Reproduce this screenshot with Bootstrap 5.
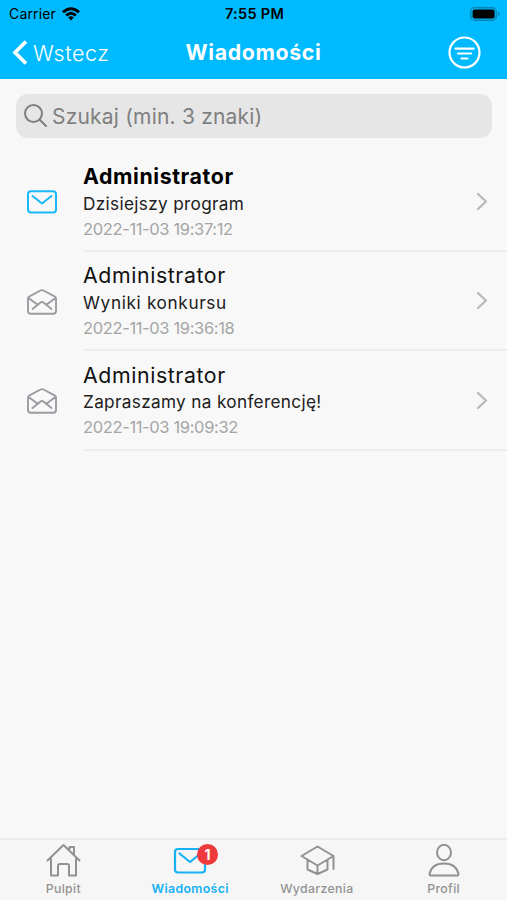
<!DOCTYPE html>
<html lang="pl">
<head>
<meta charset="utf-8">
<meta name="viewport" content="width=device-width, initial-scale=1">
<title>Wiadomości</title>
<link href="https://cdn.jsdelivr.net/npm/bootstrap@5.3.0/dist/css/bootstrap.min.css" rel="stylesheet">
<style>
body{font-family:Inter,"Open Sans",sans-serif;background:#f8f8f8;height:900px;overflow:hidden;color:#000}
svg{display:block;flex:none;fill:none;stroke:currentColor;stroke-linecap:round;stroke-linejoin:round;overflow:visible}
.app-top{background:#00baff;height:79px}
.status-bar{height:27px;font-size:14px;line-height:27px;padding:0 7px 0 9px;letter-spacing:.15px}
.status-time{font-size:14.5px;letter-spacing:.3px}
.side{flex:1 1 0}
.status-wifi{margin-left:6px}
.title-bar{height:52px;padding:0 12px;color:#fff}
.back-icon{margin-right:6px}
.back-label{font-size:21.5px;font-weight:300;letter-spacing:.55px}
.page-title{font-size:21.3px;font-weight:700;letter-spacing:.65px}
.filter-icon{margin:-1px 14px 0 0}
.search-box{margin:15px 15px 0 15.5px;height:43.5px;border-radius:12px;background:#e6e6e6;color:#7f7f7f;padding-left:8px;font-size:21px;letter-spacing:.2px}
.search-label{margin:1px 0 0 5.5px}
.msg-list{padding-top:15px}
.msg-row{height:99.4px}
.msg-icon{width:83px;padding-left:27px;color:#999ca0}
.msg-body{border-bottom:2px solid #ededed;padding:10.500px 19px 0 0}
.msg-name{font-size:21.3px;line-height:27.5px;letter-spacing:.6px;color:#111}
.msg-text{font-size:17.2px;line-height:25px;color:#202020;letter-spacing:.33px}
.msg-row:nth-child(2) .msg-text{letter-spacing:.65px}
.msg-date{font-size:16.5px;line-height:26px;color:#a5a5a5;letter-spacing:-.36px}
.msg-chev{color:#b8b8b8;margin-top:23px}
.unread .msg-icon{color:#18b9f6}
.unread .msg-name{font-weight:700;color:#000}
.tab-bar{flex:none;height:62px;background:#f6f6f6;border-top:2px solid #ebebeb;color:#929292;font-size:12.3px;font-weight:500;letter-spacing:.35px}
.tab-item{flex:1 1 0;padding-top:3px}
.tab-item svg{height:34px;margin-bottom:2.5px}
.tab-item.current{color:#14b1f5;font-weight:600}
.tab-count{left:24px;top:1px;width:21px;height:21px;background:#ee3a3d;color:#fff;font-size:14px;font-weight:700;letter-spacing:0}
</style>
<script src="https://cdn.jsdelivr.net/npm/bootstrap@5.3.0/dist/js/bootstrap.bundle.min.js"></script>
</head>
<body class="d-flex flex-column">
<header class="app-top">
  <div class="status-bar d-flex align-items-center">
    <div class="side d-flex align-items-center"><span>Carrier</span>
      <svg class="status-wifi" width="18" height="14" viewBox="0 0 18 14"><g fill="#000" stroke="none"><path d="M0 4.2Q9-3.8 18 4.2L16 6.3Q9 .2 2 6.3Z"/><path d="M3.2 7.4Q9 2.2 14.8 7.4L12.8 9.4Q9 6.1 5.2 9.4Z"/><path d="M6.2 10.4Q9 8 11.8 10.4L9 13.4Z"/></g></svg></div>
    <span class="status-time fw-semibold">7:55 PM</span>
    <div class="side d-flex justify-content-end">
      <svg width="30" height="14" viewBox="0 0 30 14"><rect x=".8" y=".8" width="25.5" height="12.4" rx="3.8" stroke="#0784b4" stroke-width="1.4"/><rect x="2.6" y="2.6" width="22" height="8.8" rx="2" fill="#000" stroke="none"/><path d="M28 5v4q1.700-.6 1.700-2T28 5Z" fill="#0784b4" stroke="none"/></svg></div>
  </div>
  <div class="title-bar d-flex align-items-center">
    <div class="side d-flex align-items-center">
      <svg class="back-icon" width="15" height="26" viewBox="0 0 15 26" stroke-width="3.600"><path d="M14 1.500 3 12.500 14 23.500" stroke-linecap="butt" stroke-linejoin="miter"/></svg>
      <span class="back-label">Wstecz</span></div>
    <span class="page-title">Wiadomości</span>
    <div class="side d-flex justify-content-end">
      <svg class="filter-icon" width="33" height="33" viewBox="0 0 33 33" stroke-width="2.200"><circle cx="16.500" cy="16.500" r="15"/><path d="M7.500 12.700h18M10 17.500h13M13.500 22.500h6"/></svg></div>
  </div>
</header>
<main class="flex-grow-1">
  <div class="search-box d-flex align-items-center">
    <svg width="23" height="23" viewBox="0 0 23 23" stroke-width="2"><circle cx="9.500" cy="9.500" r="8.500"/><path d="m15.700 15.700 6.300 6.300"/></svg>
    <span class="search-label">Szukaj (min. 3 znaki)</span>
  </div>
  <div class="msg-list">
    <div class="msg-row d-flex unread">
      <div class="msg-icon d-flex align-items-center"><svg width="30" height="24" viewBox="0 0 30 24" stroke-width="2"><rect x="1" y="1.200" width="28" height="21.200" rx="3"/><path d="m5.500 6 9.500 7.500L24.500 6"/></svg></div>
      <div class="msg-body flex-grow-1 d-flex justify-content-between"><div><div class="msg-name">Administrator</div><div class="msg-text">Dzisiejszy program</div><div class="msg-date">2022-11-03 19:37:12</div></div>
      <svg class="msg-chev" width="12" height="28" viewBox="0 0 12 28" stroke-width="2.200"><path d="m2 8 8 7.500L2 23"/></svg></div>
    </div>
    <div class="msg-row d-flex">
      <div class="msg-icon d-flex align-items-center"><svg width="30" height="26" viewBox="0 0 30 26" stroke-width="1.900"><path d="M1 9.500Q1 8 2.500 7.300L13.500 1.500Q15 .8 16.500 1.500L27.500 7.300Q29 8 29 9.500V22q0 2.700-2.700 2.700H3.700Q1 24.700 1 22ZM1.500 9 11 16M28.500 9 19 16M5.500 20 13.500 13.500Q15 12.500 16.500 13.500L24.500 20"/></svg></div>
      <div class="msg-body flex-grow-1 d-flex justify-content-between"><div><div class="msg-name">Administrator</div><div class="msg-text">Wyniki konkursu</div><div class="msg-date">2022-11-03 19:36:18</div></div>
      <svg class="msg-chev" width="12" height="28" viewBox="0 0 12 28" stroke-width="2.200"><path d="m2 8 8 7.500L2 23"/></svg></div>
    </div>
    <div class="msg-row d-flex">
      <div class="msg-icon d-flex align-items-center"><svg width="30" height="26" viewBox="0 0 30 26" stroke-width="1.900"><path d="M1 9.500Q1 8 2.500 7.300L13.500 1.500Q15 .8 16.500 1.500L27.500 7.300Q29 8 29 9.500V22q0 2.700-2.700 2.700H3.700Q1 24.700 1 22ZM1.500 9 11 16M28.500 9 19 16M5.500 20 13.500 13.500Q15 12.500 16.500 13.500L24.500 20"/></svg></div>
      <div class="msg-body flex-grow-1 d-flex justify-content-between"><div><div class="msg-name">Administrator</div><div class="msg-text">Zapraszamy na konferencję!</div><div class="msg-date">2022-11-03 19:09:32</div></div>
      <svg class="msg-chev" width="12" height="28" viewBox="0 0 12 28" stroke-width="2.200"><path d="m2 8 8 7.500L2 23"/></svg></div>
    </div>
  </div>
</main>
<nav class="tab-bar d-flex">
  <div class="tab-item d-flex flex-column align-items-center"><svg width="34" viewBox="0 0 34 34" stroke-width="2"><path d="M1.500 17.500 17.500 2 33.500 17.500M5 16V32.500H12V23q0-2 2-2h7q2 0 2 2v9.500h7V16M23.500 7V4H28v7.500"/></svg><span>Pulpit</span></div>
  <div class="tab-item current d-flex flex-column align-items-center"><div class="position-relative"><svg width="34" viewBox="0 0 34 34" stroke-width="2.200"><rect x="2" y="6" width="30" height="23.500" rx="3"/><path d="m6.500 10.500 10.500 8.500 10.500-8.500"/></svg><span class="tab-count position-absolute rounded-circle d-flex align-items-center justify-content-center">1</span></div><span>Wiadomości</span></div>
  <div class="tab-item d-flex flex-column align-items-center"><svg width="34" viewBox="0 0 34 34" stroke-width="2"><path d="M1.500 13 17.500 3.500 33.500 13 17.500 22.500ZM7.500 17v9.500L17.500 31l10-4.500V17M17.500 22.500V31M33.500 13v13"/></svg><span>Wydarzenia</span></div>
  <div class="tab-item d-flex flex-column align-items-center"><svg width="34" viewBox="0 0 34 34" stroke-width="2"><ellipse cx="17" cy="9.500" rx="7" ry="7.700"/><path d="M3.500 32.500Q2.500 32.500 2.500 31C4 24 9 20.500 17 20.500S30 24 31.500 31q0 1.500-1 1.500Z"/></svg><span>Profil</span></div>
</nav>
</body>
</html>
